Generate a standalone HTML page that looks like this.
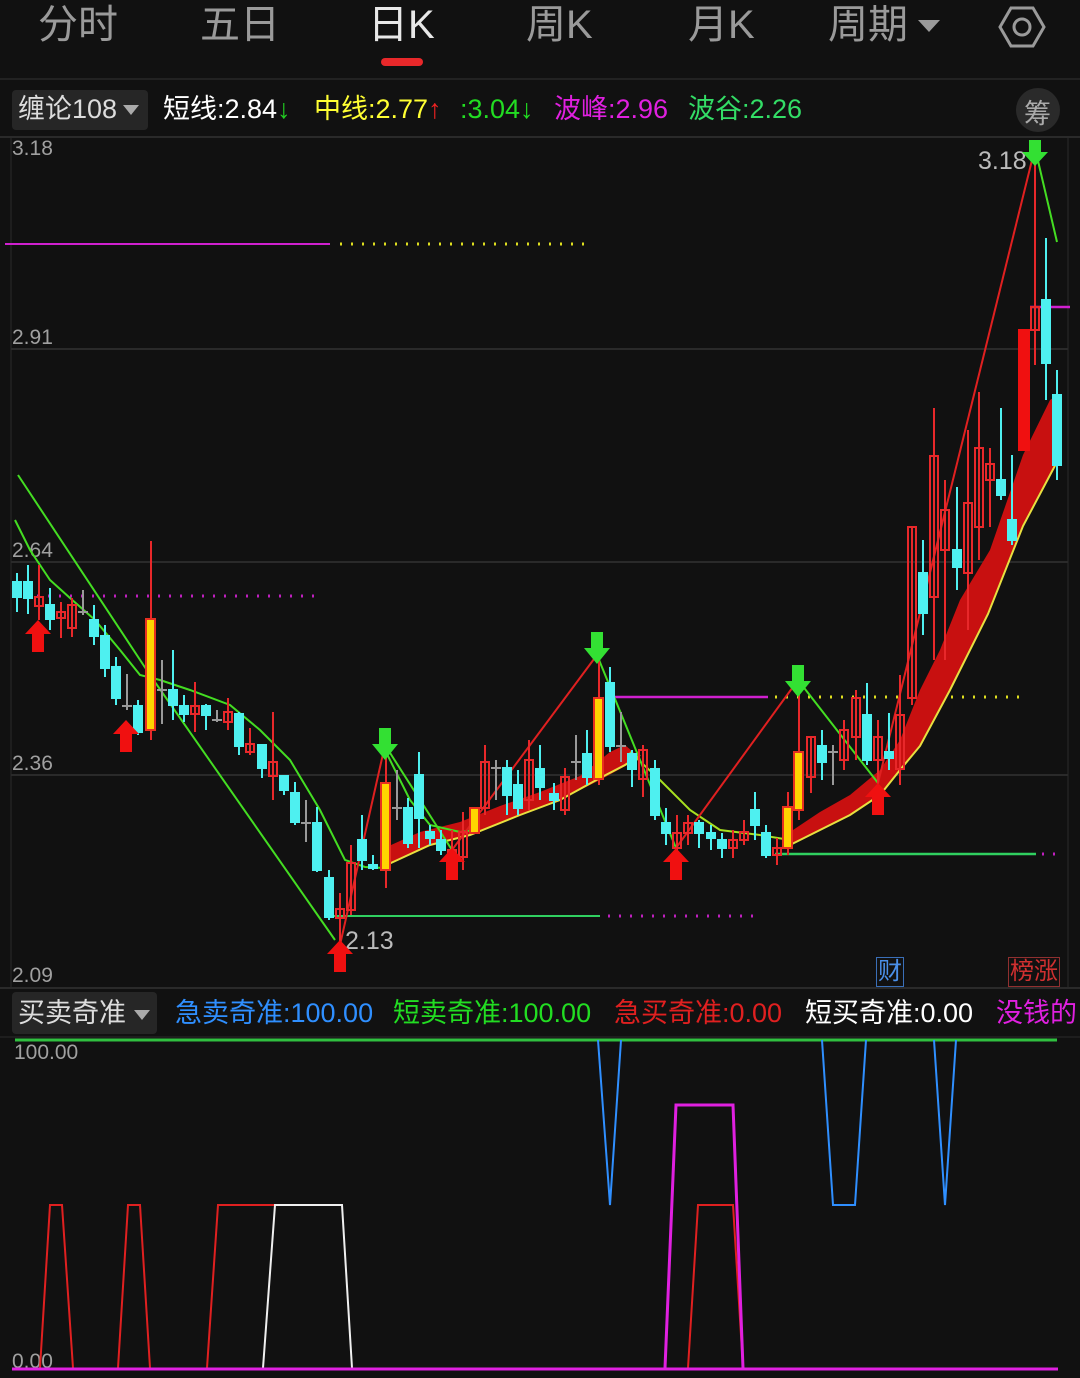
<!DOCTYPE html>
<html><head><meta charset="utf-8">
<style>
html,body{margin:0;padding:0;background:#111111;}
body{width:1080px;height:1378px;position:relative;overflow:hidden;font-family:"Liberation Sans","Noto Sans CJK SC",sans-serif;}
.t{position:absolute;white-space:nowrap;}
.nav{top:0;font-size:40px;color:#9a9a9a;line-height:50px;}
.h{font-size:27px;line-height:36px;top:91px;}
.b{font-size:27px;line-height:36px;top:995px;}
.ax{font-size:21px;color:#a0a0a0;}
svg{position:absolute;left:0;top:0;}
</style></head><body>
<div class="t nav" style="left:38px">分时</div>
<div class="t nav" style="left:200px">五日</div>
<div class="t nav" style="left:368px;color:#e8e8e8">日K</div>
<div class="t nav" style="left:526px">周K</div>
<div class="t nav" style="left:688px">月K</div>
<div class="t nav" style="left:828px">周期</div>
<div style="position:absolute;left:381px;top:58px;width:42px;height:8px;border-radius:4px;background:#e8282a"></div>
<div style="position:absolute;left:0;top:78px;width:1080px;height:2px;background:#222"></div>

<div style="position:absolute;left:12px;top:90px;width:136px;height:40px;background:#262626;border-radius:4px"></div>
<div class="t h" style="left:18px;color:#ddd">缠论108</div>
<div class="t h" style="left:163px;color:#fff">短线:2.84<span style="color:#2c2">↓</span></div>
<div class="t h" style="left:314px;color:#ffff33">中线:2.77<span style="color:#e22">↑</span></div>
<div class="t h" style="left:460px;color:#22dd22">:3.04↓</div>
<div class="t h" style="left:554px;color:#e020e0">波峰:2.96</div>
<div class="t h" style="left:688px;color:#33dd66">波谷:2.26</div>
<div style="position:absolute;left:1016px;top:88px;width:44px;height:44px;border-radius:22px;background:#2a2a2a"></div>
<div class="t" style="left:1024px;top:92px;font-size:27px;color:#aaa">筹</div>

<div class="t ax" style="left:12px;top:137px">3.18</div>
<div class="t ax" style="left:12px;top:326px">2.91</div>
<div class="t ax" style="left:12px;top:539px">2.64</div>
<div class="t ax" style="left:12px;top:752px">2.36</div>
<div class="t ax" style="left:12px;top:964px">2.09</div>
<div class="t" style="left:978px;top:147px;font-size:25px;color:#bbb">3.18</div>
<div class="t" style="left:345px;top:927px;font-size:25px;color:#bbb">2.13</div>
<div class="t" style="left:876px;top:957px;font-size:24px;color:#4a8fe8;border:1px solid #3a6fb8;line-height:28px;padding:0 1px">财</div>
<div class="t" style="left:1008px;top:957px;font-size:24px;color:#d03030;border:1px solid #903030;line-height:28px;padding:0 1px">榜涨</div>

<div style="position:absolute;left:12px;top:992px;width:145px;height:42px;background:#262626;border-radius:4px"></div>
<div class="t b" style="left:18px;color:#ddd">买卖奇准</div>
<div class="t b" style="left:175px;color:#2f8fff">急卖奇准:100.00</div>
<div class="t b" style="left:393px;color:#22dd22">短卖奇准:100.00</div>
<div class="t b" style="left:614px;color:#e02020">急买奇准:0.00</div>
<div class="t b" style="left:805px;color:#fff">短买奇准:0.00</div>
<div class="t b" style="left:996px;color:#e020e0">没钱的</div>
<div class="t ax" style="left:14px;top:1041px">100.00</div>
<div class="t ax" style="left:12px;top:1350px">0.00</div>

<svg width="1080" height="1378" viewBox="0 0 1080 1378">
<defs><style>
.c{fill:#4ef0f0;stroke:#4ef0f0;stroke-width:2}
.r{fill:none;stroke:#e8282a;stroke-width:2}
.R{fill:#f01010;stroke:#f01010;stroke-width:2}
.y{fill:#ffd400;stroke:#e83020;stroke-width:2}
.g{fill:#999;stroke:#999;stroke-width:2}
</style></defs>
<polygon points="918,20 940,20 929,32" fill="#9a9a9a"/>
<polygon points="1011,8 1033,8 1044,27 1033,46 1011,46 1000,27" fill="none" stroke="#9a9a9a" stroke-width="3"/>
<circle cx="1022" cy="27" r="8" fill="none" stroke="#9a9a9a" stroke-width="3"/>
<polygon points="123,105 139,105 131,115" fill="#aaa"/>
<polygon points="134,1010 150,1010 142,1020" fill="#aaa"/>
<line x1="0" y1="137" x2="1080" y2="137" stroke="#2a2a2a" stroke-width="2"/>
<line x1="11" y1="137" x2="11" y2="988" stroke="#2a2a2a"/>
<line x1="1068" y1="137" x2="1068" y2="988" stroke="#2a2a2a"/>
<line x1="11" y1="349" x2="1068" y2="349" stroke="#2a2a2a" stroke-width="2"/>
<line x1="11" y1="562" x2="1068" y2="562" stroke="#2a2a2a" stroke-width="2"/>
<line x1="11" y1="775" x2="1068" y2="775" stroke="#2a2a2a" stroke-width="2"/>
<line x1="0" y1="988" x2="1080" y2="988" stroke="#2a2a2a" stroke-width="2"/>
<line x1="5" y1="244" x2="330" y2="244" stroke="#d020d0" stroke-width="2"/>
<line x1="340" y1="244" x2="590" y2="244" stroke="#e0e020" stroke-width="3" stroke-dasharray="2 9"/>
<line x1="15" y1="596" x2="320" y2="596" stroke="#c020c0" stroke-width="3" stroke-dasharray="2 9"/>
<line x1="330" y1="916" x2="600" y2="916" stroke="#30d060" stroke-width="2"/>
<line x1="608" y1="916" x2="760" y2="916" stroke="#c020c0" stroke-width="3" stroke-dasharray="2 9"/>
<line x1="605" y1="697" x2="768" y2="697" stroke="#d020d0" stroke-width="2.5"/>
<line x1="775" y1="697" x2="1025" y2="697" stroke="#e0e020" stroke-width="3" stroke-dasharray="2 9"/>
<line x1="775" y1="854" x2="1036" y2="854" stroke="#30d060" stroke-width="2.5"/>
<line x1="1042" y1="854" x2="1060" y2="854" stroke="#c020c0" stroke-width="3" stroke-dasharray="2 9"/>
<line x1="1030" y1="307" x2="1070" y2="307" stroke="#d020d0" stroke-width="2.5"/>
<polygon fill="#c81010" points="380,850 420,832 460,822 500,806 540,792 580,776 610,752 625,745 640,758 600,780 560,800 520,815 470,835 430,845 380,868"/>
<polygon fill="#c81010" points="790,832 820,812 850,795 880,770 900,740 920,690 940,650 960,600 990,550 1023,455 1050,400 1058,395 1058,460 1023,526 988,614 950,690 920,746 900,770 880,795 850,815 790,845"/>
<polyline fill="none" stroke="#e8e040" stroke-width="2" points="380,868 430,845 470,835 520,815 560,800 600,778 625,765 640,755"/>
<polyline fill="none" stroke="#e8e040" stroke-width="2" points="790,845 850,815 880,795 900,770 920,746 950,690 988,614 1023,526 1058,460"/>
<polyline fill="none" stroke="#44dd22" stroke-width="2" points="15,520 30,550 50,580 70,598 95,620 120,650 140,675 160,680 190,690 230,705 260,730 290,760 320,810 345,860 365,867 385,868"/>
<polyline fill="none" stroke="#44dd22" stroke-width="2" points="385,750 410,800 430,825 460,832 475,830"/>
<polyline fill="none" stroke="#a8e020" stroke-width="2" points="630,752 660,780 690,810 720,830 760,835 790,840"/>
<polyline fill="none" stroke="#44dd22" stroke-width="2" points="18,475 150,675 335,940"/>
<polyline fill="none" stroke="#e02020" stroke-width="2" points="340,945 385,745"/>
<polyline fill="none" stroke="#44dd22" stroke-width="2" points="385,745 452,850"/>
<polyline fill="none" stroke="#e02020" stroke-width="2" points="452,850 597,655"/>
<polyline fill="none" stroke="#44dd22" stroke-width="2" points="597,655 676,848"/>
<polyline fill="none" stroke="#e02020" stroke-width="2" points="676,848 798,680"/>
<polyline fill="none" stroke="#44dd22" stroke-width="2" points="798,680 878,783"/>
<polyline fill="none" stroke="#e02020" stroke-width="2" points="878,783 1035,148"/>
<polyline fill="none" stroke="#44dd22" stroke-width="2" points="1035,148 1057,242"/>
<g stroke-width="2">
<g stroke="#4ef0f0">
<line x1="17" y1="573" x2="17" y2="612"/><line x1="28" y1="565" x2="28" y2="614"/><line x1="50" y1="588" x2="50" y2="630"/><line x1="94" y1="605" x2="94" y2="645"/><line x1="105" y1="625" x2="105" y2="677"/><line x1="116" y1="657" x2="116" y2="705"/><line x1="138" y1="700" x2="138" y2="735"/><line x1="173" y1="650" x2="173" y2="720"/><line x1="184" y1="695" x2="184" y2="722"/><line x1="206" y1="704" x2="206" y2="730"/><line x1="239" y1="712" x2="239" y2="755"/><line x1="262" y1="745" x2="262" y2="778"/><line x1="284" y1="776" x2="284" y2="795"/><line x1="295" y1="782" x2="295" y2="825"/><line x1="317" y1="807" x2="317" y2="872"/><line x1="329" y1="870" x2="329" y2="920"/><line x1="362" y1="815" x2="362" y2="870"/><line x1="373" y1="855" x2="373" y2="870"/><line x1="408" y1="798" x2="408" y2="848"/><line x1="419" y1="752" x2="419" y2="848"/><line x1="430" y1="825" x2="430" y2="845"/><line x1="441" y1="830" x2="441" y2="855"/><line x1="507" y1="760" x2="507" y2="815"/><line x1="518" y1="770" x2="518" y2="815"/><line x1="540" y1="745" x2="540" y2="800"/><line x1="554" y1="783" x2="554" y2="810"/><line x1="587" y1="730" x2="587" y2="785"/><line x1="610" y1="667" x2="610" y2="752"/><line x1="632" y1="750" x2="632" y2="787"/><line x1="655" y1="760" x2="655" y2="820"/><line x1="666" y1="808" x2="666" y2="845"/><line x1="699" y1="820" x2="699" y2="848"/><line x1="711" y1="825" x2="711" y2="850"/><line x1="722" y1="833" x2="722" y2="858"/><line x1="755" y1="792" x2="755" y2="840"/><line x1="766" y1="825" x2="766" y2="858"/><line x1="822" y1="730" x2="822" y2="780"/><line x1="867" y1="683" x2="867" y2="765"/><line x1="889" y1="713" x2="889" y2="770"/><line x1="923" y1="540" x2="923" y2="635"/><line x1="957" y1="487" x2="957" y2="590"/><line x1="1001" y1="408" x2="1001" y2="500"/><line x1="1012" y1="455" x2="1012" y2="545"/><line x1="1046" y1="238" x2="1046" y2="400"/><line x1="1057" y1="370" x2="1057" y2="480"/>
</g>
<g stroke="#e8282a">
<line x1="39" y1="565" x2="39" y2="620"/><line x1="61" y1="602" x2="61" y2="638"/><line x1="72" y1="598" x2="72" y2="637"/><line x1="151" y1="541" x2="151" y2="740"/><line x1="195" y1="682" x2="195" y2="732"/><line x1="228" y1="698" x2="228" y2="730"/><line x1="250" y1="728" x2="250" y2="755"/><line x1="273" y1="712" x2="273" y2="800"/><line x1="340" y1="893" x2="340" y2="955"/><line x1="351" y1="845" x2="351" y2="915"/><line x1="386" y1="750" x2="386" y2="888"/><line x1="452" y1="830" x2="452" y2="870"/><line x1="463" y1="812" x2="463" y2="870"/><line x1="485" y1="745" x2="485" y2="815"/><line x1="529" y1="740" x2="529" y2="810"/><line x1="565" y1="768" x2="565" y2="815"/><line x1="599" y1="660" x2="599" y2="785"/><line x1="643" y1="745" x2="643" y2="797"/><line x1="677" y1="815" x2="677" y2="860"/><line x1="688" y1="815" x2="688" y2="845"/><line x1="733" y1="830" x2="733" y2="858"/><line x1="744" y1="820" x2="744" y2="845"/><line x1="777" y1="838" x2="777" y2="865"/><line x1="788" y1="792" x2="788" y2="855"/><line x1="799" y1="690" x2="799" y2="820"/><line x1="811" y1="737" x2="811" y2="793"/><line x1="844" y1="720" x2="844" y2="770"/><line x1="856" y1="690" x2="856" y2="760"/><line x1="878" y1="720" x2="878" y2="790"/><line x1="900" y1="675" x2="900" y2="785"/><line x1="912" y1="527" x2="912" y2="705"/><line x1="934" y1="408" x2="934" y2="660"/><line x1="945" y1="480" x2="945" y2="660"/><line x1="968" y1="430" x2="968" y2="630"/><line x1="979" y1="392" x2="979" y2="560"/><line x1="990" y1="448" x2="990" y2="527"/><line x1="1035" y1="148" x2="1035" y2="365"/>
</g>
<g stroke="#999">
<line x1="83" y1="590" x2="83" y2="615"/><line x1="127" y1="674" x2="127" y2="710"/><line x1="162" y1="660" x2="162" y2="724"/><line x1="217" y1="710" x2="217" y2="722"/><line x1="306" y1="800" x2="306" y2="842"/><line x1="397" y1="770" x2="397" y2="820"/><line x1="496" y1="760" x2="496" y2="800"/><line x1="576" y1="735" x2="576" y2="780"/><line x1="621" y1="712" x2="621" y2="762"/><line x1="833" y1="745" x2="833" y2="785"/>
<line x1="78" y1="612" x2="88" y2="612"/><line x1="122" y1="706" x2="132" y2="706"/><line x1="157" y1="690" x2="167" y2="690"/><line x1="212" y1="720" x2="222" y2="720"/><line x1="301" y1="823" x2="311" y2="823"/><line x1="392" y1="808" x2="402" y2="808"/><line x1="491" y1="768" x2="501" y2="768"/><line x1="571" y1="762" x2="581" y2="762"/><line x1="616" y1="746" x2="626" y2="746"/><line x1="828" y1="752" x2="838" y2="752"/>
</g>
</g>
<g class="c">
<rect x="13" y="582" width="8" height="15"/><rect x="24" y="582" width="8" height="16"/><rect x="46" y="605" width="8" height="14"/><rect x="90" y="620" width="8" height="16"/><rect x="101" y="636" width="8" height="32"/><rect x="112" y="667" width="8" height="31"/><rect x="134" y="706" width="8" height="26"/><rect x="169" y="690" width="8" height="15"/><rect x="180" y="706" width="8" height="8"/><rect x="202" y="706" width="8" height="9"/><rect x="235" y="714" width="8" height="32"/><rect x="258" y="745" width="8" height="23"/><rect x="280" y="776" width="8" height="14"/><rect x="291" y="793" width="8" height="29"/><rect x="313" y="823" width="8" height="47"/><rect x="325" y="878" width="8" height="39"/><rect x="358" y="840" width="8" height="20"/><rect x="369" y="865" width="8" height="3"/><rect x="404" y="808" width="8" height="35"/><rect x="415" y="775" width="8" height="43"/><rect x="426" y="832" width="8" height="6"/><rect x="437" y="840" width="8" height="10"/><rect x="503" y="768" width="8" height="27"/><rect x="514" y="785" width="8" height="23"/><rect x="536" y="769" width="8" height="18"/><rect x="550" y="794" width="8" height="6"/><rect x="583" y="754" width="8" height="23"/><rect x="606" y="683" width="8" height="63"/><rect x="628" y="754" width="8" height="15"/><rect x="651" y="769" width="8" height="46"/><rect x="662" y="823" width="8" height="10"/><rect x="695" y="823" width="8" height="10"/><rect x="707" y="833" width="8" height="5"/><rect x="718" y="840" width="8" height="8"/><rect x="751" y="810" width="8" height="15"/><rect x="762" y="833" width="8" height="22"/><rect x="818" y="746" width="8" height="16"/><rect x="863" y="715" width="8" height="45"/><rect x="885" y="752" width="8" height="6"/><rect x="919" y="573" width="8" height="40"/><rect x="953" y="550" width="8" height="17"/><rect x="997" y="480" width="8" height="15"/><rect x="1008" y="520" width="8" height="20"/><rect x="1042" y="300" width="8" height="63"/><rect x="1053" y="395" width="8" height="70"/>
</g>
<g class="r">
<rect x="35" y="597" width="8" height="9"/><rect x="57" y="612" width="8" height="6"/><rect x="68" y="605" width="8" height="23"/><rect x="191" y="706" width="8" height="8"/><rect x="224" y="712" width="8" height="10"/><rect x="246" y="744" width="8" height="8"/><rect x="269" y="762" width="8" height="14"/><rect x="336" y="909" width="8" height="9"/><rect x="347" y="863" width="8" height="47"/><rect x="448" y="850" width="8" height="7"/><rect x="459" y="832" width="8" height="25"/><rect x="481" y="762" width="8" height="46"/><rect x="525" y="760" width="8" height="40"/><rect x="561" y="777" width="8" height="33"/><rect x="639" y="750" width="8" height="29"/><rect x="673" y="833" width="8" height="15"/><rect x="684" y="823" width="8" height="10"/><rect x="729" y="840" width="8" height="8"/><rect x="740" y="832" width="8" height="8"/><rect x="773" y="848" width="8" height="7"/><rect x="807" y="737" width="8" height="40"/><rect x="840" y="730" width="8" height="30"/><rect x="852" y="698" width="8" height="39"/><rect x="874" y="737" width="8" height="23"/><rect x="896" y="715" width="8" height="54"/><rect x="908" y="527" width="8" height="171"/><rect x="930" y="456" width="8" height="141"/><rect x="941" y="510" width="8" height="40"/><rect x="964" y="503" width="8" height="70"/><rect x="975" y="448" width="8" height="79"/><rect x="986" y="464" width="8" height="16"/><rect x="1031" y="307" width="8" height="23"/>
</g>
<rect class="R" x="1019" y="330" width="10" height="120"/>
<g class="y">
<rect x="146" y="619" width="9" height="111"/><rect x="381" y="783" width="9" height="87"/><rect x="470" y="808" width="9" height="25"/><rect x="594" y="698" width="9" height="81"/><rect x="783" y="807" width="9" height="41"/><rect x="794" y="752" width="9" height="58"/>
</g>
<g fill="#f01010">
<polygon points="38,620 51,634 44,634 44,652 32,652 32,634 25,634"/>
<polygon points="126,720 139,734 132,734 132,752 120,752 120,734 113,734"/>
<polygon points="340,940 353,954 346,954 346,972 334,972 334,954 327,954"/>
<polygon points="452,848 465,862 458,862 458,880 446,880 446,862 439,862"/>
<polygon points="676,848 689,862 682,862 682,880 670,880 670,862 663,862"/>
<polygon points="878,783 891,797 884,797 884,815 872,815 872,797 865,797"/>
</g>
<g fill="#33e033">
<polygon points="379,728 391,728 391,744 398,744 385,760 372,744 379,744"/>
<polygon points="591,632 603,632 603,648 610,648 597,664 584,648 591,648"/>
<polygon points="792,665 804,665 804,681 811,681 798,697 785,681 792,681"/>
<polygon points="1029,140 1041,140 1041,152 1048,152 1035,166 1022,152 1029,152"/>
</g>
<line x1="0" y1="1037" x2="1080" y2="1037" stroke="#2a2a2a"/>
<line x1="15" y1="1040" x2="1057" y2="1040" stroke="#30c040" stroke-width="3"/>
<g fill="none" stroke-width="2">
<polyline stroke="#e02020" points="40,1368 50,1205 62,1205 73,1368"/>
<polyline stroke="#e02020" points="118,1368 128,1205 140,1205 150,1368"/>
<polyline stroke="#e02020" points="207,1368 218,1205 275,1205"/>
<polyline stroke="#f0f0f0" points="263,1368 275,1205 342,1205 352,1368"/>
<polyline stroke="#e02020" points="688,1368 698,1205 733,1205 743,1368"/>
<polyline stroke="#e020e0" stroke-width="3" points="665,1368 676,1105 733,1105 743,1368"/>
<polyline stroke="#2f8fff" points="598,1040 610,1205 621,1040"/>
<polyline stroke="#2f8fff" points="822,1040 833,1205 855,1205 866,1040"/>
<polyline stroke="#2f8fff" points="934,1040 945,1205 956,1040"/>
</g>
<line x1="12" y1="1369" x2="1058" y2="1369" stroke="#e020e0" stroke-width="3"/>
</svg>
</body></html>
